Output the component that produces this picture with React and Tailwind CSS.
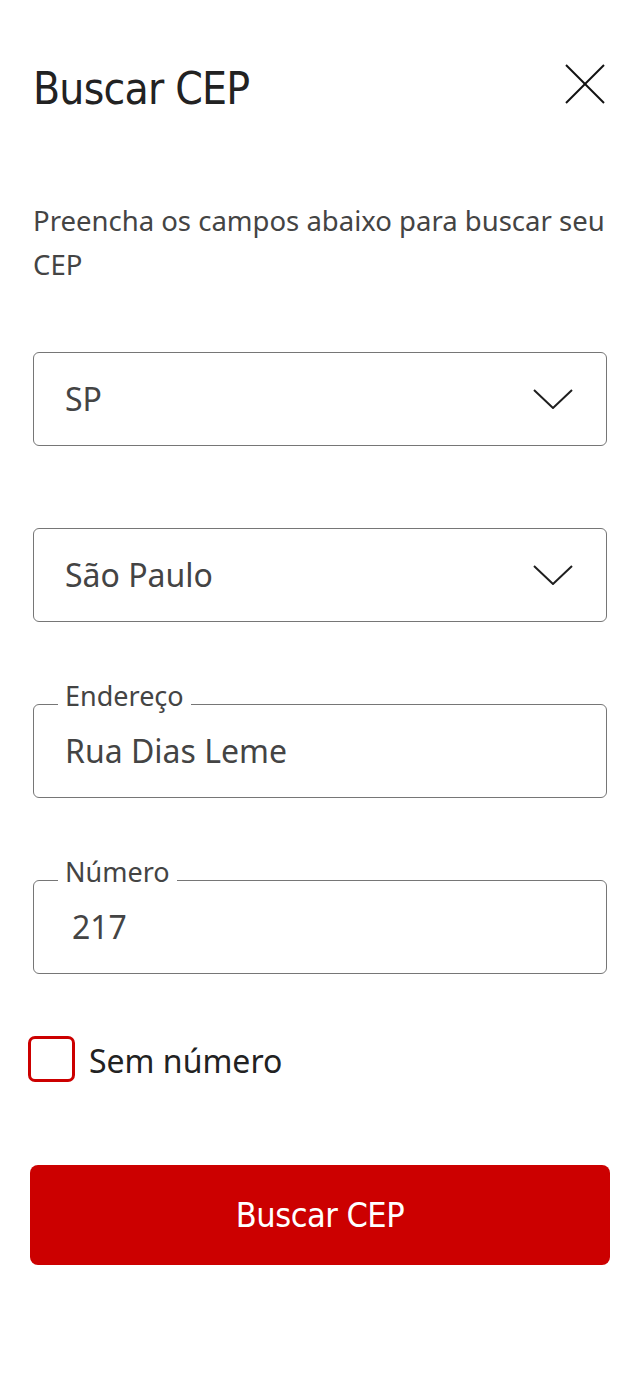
import React from "react";

function Chevron() {
  return (
    <svg width="40" height="20" viewBox="0 0 40 20" fill="none" className="shrink-0">
      <polyline points="1,1 20,19 39,1" stroke="#1f1f1f" strokeWidth="2" strokeLinejoin="miter" />
    </svg>
  );
}

function SelectBox({ value }) {
  return (
    <div className="flex h-[94px] items-center justify-between rounded-[6px] border-[1.5px] border-[#767676] pl-[31px] pr-[33px]">
      <span className="text-[32px] leading-none text-[#444444]">{value}</span>
      <Chevron />
    </div>
  );
}

function LabeledField({ label, value, valuePad = "pl-[31px]" }) {
  return (
    <div className={`relative flex h-[94px] items-center rounded-[6px] border-[1.5px] border-[#767676] ${valuePad}`}>
      <span className="absolute left-[24px] top-[-23px] bg-white px-[7px] text-[27px] leading-none text-[#444444]">
        {label}
      </span>
      <span className="text-[32px] leading-none text-[#444444]">{value}</span>
    </div>
  );
}

const narrow = { fontFamily: '"Liberation Sans Narrow", "DejaVu Sans Condensed", "Noto Sans", sans-serif' };

export default function App() {
  return (
    <div
      className="min-h-[1382px] w-[640px] bg-white px-[33px]"
      style={{ fontFamily: '"Noto Sans", "Open Sans", sans-serif' }}
    >
      <div className="flex items-start justify-between pt-[64px]">
        <h1 className="mt-[3px] text-[44px] font-normal leading-none tracking-[-0.8px] text-[#222222]" style={narrow}>
          Buscar CEP
        </h1>
        <button className="mr-[2px] h-[40px] w-[40px]" aria-label="Fechar">
          <svg width="40" height="40" viewBox="0 0 40 40" fill="none">
            <line x1="1" y1="1" x2="39" y2="39" stroke="#111111" strokeWidth="2" />
            <line x1="39" y1="1" x2="1" y2="39" stroke="#111111" strokeWidth="2" />
          </svg>
        </button>
      </div>

      <p className="-mr-[10px] mt-[88px] text-[27.5px] leading-[44px] text-[#444444]">
        Preencha os campos abaixo para buscar seu CEP
      </p>

      <div className="mt-[65px] flex flex-col gap-[82px]">
        <SelectBox value="SP" />
        <SelectBox value="São Paulo" />
        <LabeledField label="Endereço" value="Rua Dias Leme" />
        <LabeledField label="Número" value="217" valuePad="pl-[38px]" />
      </div>

      <label className="-ml-[5px] mt-[62px] flex h-[46px] items-center gap-[14px]">
        <span className="h-[46px] w-[47px] shrink-0 rounded-[7px] border-[3px] border-[#cc0000] bg-white" />
        <span className="mt-[3px] text-[32px] leading-none text-[#222222]">Sem número</span>
      </label>

      <button
        className="-mx-[3px] mt-[83px] flex h-[100px] w-[580px] items-center justify-center rounded-[8px] bg-[#cc0000] text-[34px] leading-none tracking-[-0.5px] text-white"
        style={narrow}
      >
        Buscar CEP
      </button>
    </div>
  );
}
